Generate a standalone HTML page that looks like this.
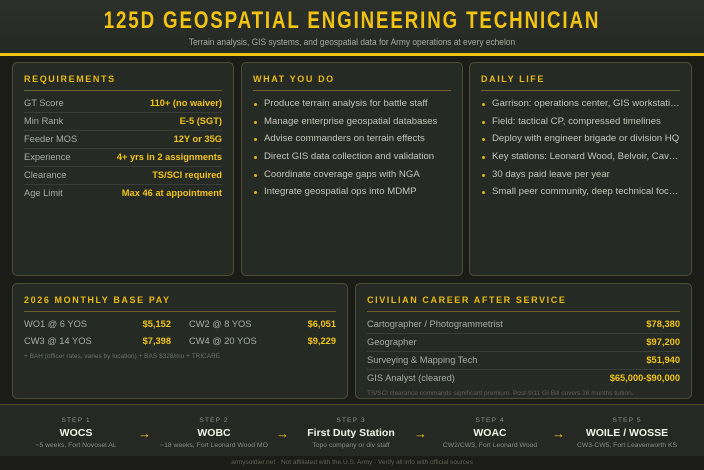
<!DOCTYPE html><html><head><meta charset="utf-8"><style>
*{margin:0;padding:0;box-sizing:border-box}
body{width:704px;height:470px;overflow:hidden;background:#1b1c17;font-family:"Liberation Sans",sans-serif;color:#c8c8c0;position:relative}
.hdr{position:absolute;left:0;top:0;width:704px;height:53px;background:linear-gradient(#2c302a,#262923)}
.hdr h1{position:absolute;top:7px;width:100%;text-align:center;font-size:24px;font-weight:bold;color:#f2c411;letter-spacing:2.4px;transform:scaleX(.78);transform-origin:center}
.hdr p{position:absolute;top:37px;width:100%;text-align:center;font-size:9.5px;color:#a8aba2;transform:scaleX(.88)}
.bar{position:absolute;left:0;top:53px;width:704px;height:3px;background:#f2c411}
.pn{position:absolute;background:#262a24;border:1px solid #4e4d33;border-radius:5px}
.pn h2{position:absolute;left:11px;top:11px;font-size:9px;font-weight:bold;color:#e8bb14;letter-spacing:1.6px}
.pn .ln{position:absolute;left:11px;right:11px;top:27px;height:1px;background:#6b6230}
.row{position:absolute;left:11px;right:11px;height:18px;font-size:9.3px;border-bottom:1px solid #3a3d36;color:#a9aca3}
.row b{position:absolute;right:0;top:3px;color:#f0c419;font-weight:bold}
.row span{position:absolute;left:0;top:3px}
ul{position:absolute;left:11px;right:8px;top:35px;list-style:none}
li{font-size:9.6px;height:17.7px;color:#c4c5bd;white-space:nowrap;overflow:hidden;text-overflow:ellipsis;padding-left:11px;position:relative}
li:before{content:"";position:absolute;left:1px;top:5px;width:3px;height:3px;border-radius:50%;background:#e0b416}
.ft{position:absolute;left:0;top:404px;width:704px;height:52px;background:#262923;border-top:1px solid #4e4a2a}
.st{position:absolute;top:12px;text-align:center;width:160px;margin-left:-80px}
.st .a{font-size:6.8px;color:#8a8c84;letter-spacing:1px}
.st .b{font-size:10.5px;font-weight:bold;color:#f2f2ea;margin-top:3px}
.st .c{font-size:6.8px;color:#8a8c84;margin-top:3px}
.ar{position:absolute;top:21px;color:#f0c419;font-size:13px;font-weight:bold}
.bot{position:absolute;top:459px;width:100%;text-align:center;font-size:6.5px;color:#5e6058}
</style></head><body>
<div class="hdr"><h1>125D GEOSPATIAL ENGINEERING TECHNICIAN</h1><p>Terrain analysis, GIS systems, and geospatial data for Army operations at every echelon</p></div>
<div class="bar"></div>

<div class="pn" style="left:12px;top:62px;width:222px;height:214px"><h2>REQUIREMENTS</h2><div class="ln"></div>
<div class="row" style="top:32px"><span>GT Score</span><b>110+ (no waiver)</b></div>
<div class="row" style="top:50px"><span>Min Rank</span><b>E-5 (SGT)</b></div>
<div class="row" style="top:68px"><span>Feeder MOS</span><b>12Y or 35G</b></div>
<div class="row" style="top:86px"><span>Experience</span><b>4+ yrs in 2 assignments</b></div>
<div class="row" style="top:104px"><span>Clearance</span><b>TS/SCI required</b></div>
<div class="row" style="top:122px;border:0"><span>Age Limit</span><b>Max 46 at appointment</b></div>
</div>

<div class="pn" style="left:241px;top:62px;width:222px;height:214px"><h2>WHAT YOU DO</h2><div class="ln"></div>
<ul><li>Produce terrain analysis for battle staff</li><li>Manage enterprise geospatial databases</li><li>Advise commanders on terrain effects</li><li>Direct GIS data collection and validation</li><li>Coordinate coverage gaps with NGA</li><li>Integrate geospatial ops into MDMP</li></ul></div>

<div class="pn" style="left:469px;top:62px;width:223px;height:214px"><h2>DAILY LIFE</h2><div class="ln"></div>
<ul><li>Garrison: operations center, GIS workstati…</li><li>Field: tactical CP, compressed timelines</li><li>Deploy with engineer brigade or division HQ</li><li>Key stations: Leonard Wood, Belvoir, Cava…</li><li>30 days paid leave per year</li><li>Small peer community, deep technical foc…</li></ul></div>

<div class="pn" style="left:12px;top:283px;width:336px;height:116px"><h2>2026 MONTHLY BASE PAY</h2><div class="ln"></div>
<div class="row" style="top:32px;right:176px;border:0"><span>WO1 @ 6 YOS</span><b>$5,152</b></div>
<div class="row" style="top:32px;left:176px;border:0"><span>CW2 @ 8 YOS</span><b>$6,051</b></div>
<div class="row" style="top:49px;right:176px;border:0"><span>CW3 @ 14 YOS</span><b>$7,398</b></div>
<div class="row" style="top:49px;left:176px;border:0"><span>CW4 @ 20 YOS</span><b>$9,229</b></div>
<div style="position:absolute;left:11px;top:69px;font-size:6.5px;color:#6d7068">+ BAH (officer rates, varies by location) + BAS $328/mo + TRICARE</div>
</div>

<div class="pn" style="left:355px;top:283px;width:337px;height:116px"><h2>CIVILIAN CAREER AFTER SERVICE</h2><div class="ln"></div>
<div class="row" style="top:32px"><span>Cartographer / Photogrammetrist</span><b>$78,380</b></div>
<div class="row" style="top:50px"><span>Geographer</span><b>$97,200</b></div>
<div class="row" style="top:68px"><span>Surveying &amp; Mapping Tech</span><b>$51,940</b></div>
<div class="row" style="top:86px;border:0"><span>GIS Analyst (cleared)</span><b>$65,000-$90,000</b></div>
<div style="position:absolute;left:11px;top:106px;font-size:6.5px;color:#5c5f57">TS/SCI clearance commands significant premium. Post-9/11 GI Bill covers 36 months tuition.</div>
</div>

<div class="ft">
<div class="st" style="left:76px"><div class="a">STEP 1</div><div class="b">WOCS</div><div class="c">~5 weeks, Fort Novosel AL</div></div>
<div class="ar" style="left:138px">→</div>
<div class="st" style="left:214px"><div class="a">STEP 2</div><div class="b">WOBC</div><div class="c">~18 weeks, Fort Leonard Wood MO</div></div>
<div class="ar" style="left:276px">→</div>
<div class="st" style="left:351px"><div class="a">STEP 3</div><div class="b">First Duty Station</div><div class="c">Topo company or div staff</div></div>
<div class="ar" style="left:414px">→</div>
<div class="st" style="left:490px"><div class="a">STEP 4</div><div class="b">WOAC</div><div class="c">CW2/CW3, Fort Leonard Wood</div></div>
<div class="ar" style="left:552px">→</div>
<div class="st" style="left:627px"><div class="a">STEP 5</div><div class="b">WOILE / WOSSE</div><div class="c">CW3-CW5, Fort Leavenworth KS</div></div>
</div>
<div class="bot">armysoldier.net · Not affiliated with the U.S. Army · Verify all info with official sources</div>
</body></html>
